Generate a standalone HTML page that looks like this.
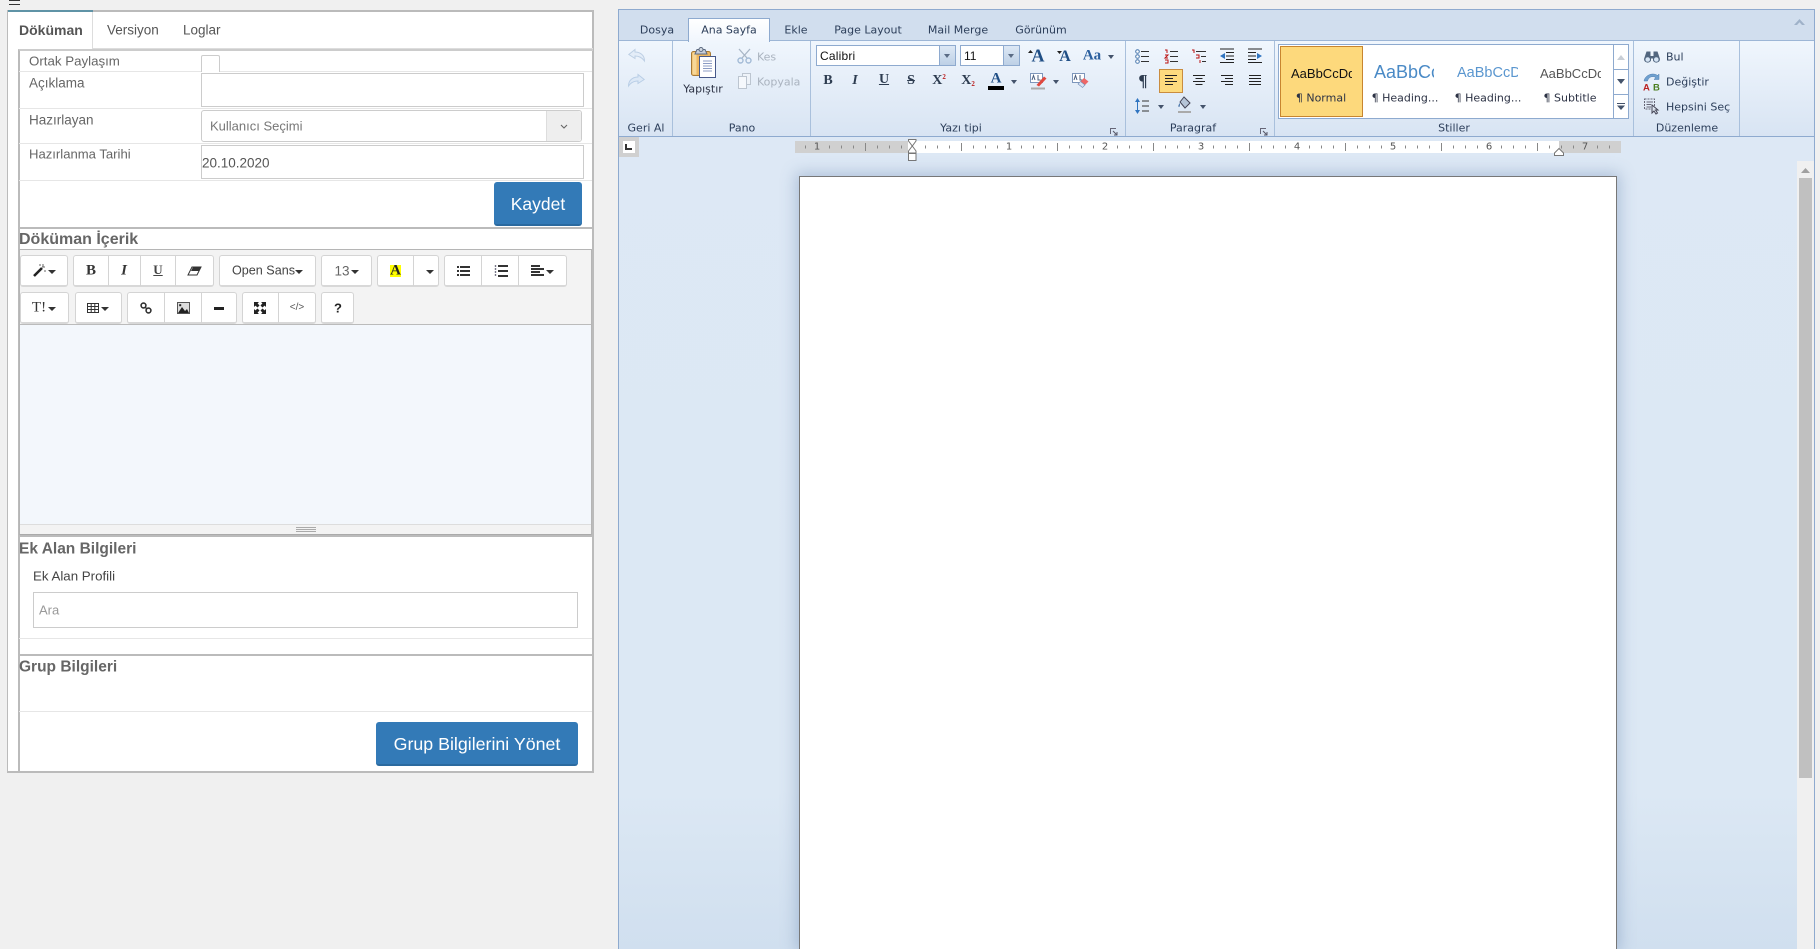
<!DOCTYPE html>
<html lang="tr"><head><meta charset="utf-8"><title>Döküman</title>
<style>
*{box-sizing:border-box}
html,body{margin:0;padding:0;width:1820px;height:949px;overflow:hidden;background:#f0f0f0;font-family:"Liberation Sans",sans-serif}
.a{position:absolute}
.t{position:absolute;white-space:nowrap;transform:translateY(-50%);color:#666;font-size:13.5px;line-height:1}
.c{position:absolute;white-space:nowrap;transform:translate(-50%,-50%);line-height:1}
.line{position:absolute;background:#e6e6e6;height:1px;left:19px;width:573px}
.thick{position:absolute;background:#bbb;height:2px;left:18px;width:575px}
.inp{position:absolute;background:#fff;border:1px solid #ccc}
.btn{position:absolute;background:#337ab7;border-bottom:2px solid #2b6a9f;border-radius:3px;color:#fff;text-align:center}
.g{position:absolute;background:#fff;border:1px solid #d4d4d4;border-bottom:2px solid #d8d8d8;border-radius:3px}
.s{position:absolute;width:1px;background:#d4d4d4}
.car{position:absolute;width:0;height:0;border-left:4px solid transparent;border-right:4px solid transparent;border-top:4px solid #333;transform:translate(-50%,-50%)}
.rt{position:absolute;white-space:nowrap;transform:translateY(-50%);font:11px "DejaVu Sans",sans-serif;color:#2c3e5a;line-height:1}
.rc{position:absolute;white-space:nowrap;transform:translate(-50%,-50%);font:11px "DejaVu Sans",sans-serif;color:#2c3e5a;line-height:1}
.sep{position:absolute;top:41px;height:95px;width:1px;background:#a9c0dc}
.rcar{position:absolute;width:0;height:0;border-left:3.5px solid transparent;border-right:3.5px solid transparent;border-top:4px solid #44536b;transform:translate(-50%,-50%)}
svg{position:absolute;overflow:visible}
</style></head><body>

<!-- hamburger -->
<div class="a" style="left:9px;top:0;width:11px;height:1px;background:#333"></div>
<div class="a" style="left:9px;top:4px;width:11px;height:1px;background:#333"></div>

<!-- LEFT PANEL -->
<div class="a" style="left:7px;top:10px;width:587px;height:763px;background:#fff;border:1px solid #bbb;border-top:2px solid #bbb;border-right:2px solid #bbb;border-bottom:2px solid #bbb"></div>
<div class="a" style="left:8px;top:10px;width:85px;height:2px;background:#5f93a6"></div>
<div class="a" style="left:92px;top:12px;width:1px;height:37px;background:#ddd"></div>
<div class="a" style="left:93px;top:48px;width:500px;height:1px;background:#ddd"></div>
<div class="t" style="left:19px;top:30px;font-weight:bold;font-size:14px;color:#555">Döküman</div>
<div class="t" style="left:107px;top:30px;color:#555">Versiyon</div>
<div class="t" style="left:183px;top:30px;color:#555">Loglar</div>

<div class="a" style="left:18px;top:49px;width:575px;height:723px;border-left:2px solid #bbb;border-top:2px solid #ccc"></div>
<div class="line" style="top:71px;height:1px"></div>
<div class="line" style="top:108px"></div>
<div class="line" style="top:143px"></div>
<div class="line" style="top:180px"></div>

<div class="t" style="left:29px;top:61px;font-size:13.3px">Ortak Paylaşım</div>
<div class="inp" style="left:201px;top:55px;width:19px;height:17px;border-bottom:0;border-radius:2px 2px 0 0"></div>
<div class="t" style="left:29px;top:83px">Açıklama</div>
<div class="inp" style="left:201px;top:73px;width:383px;height:34px"></div>
<div class="t" style="left:29px;top:120px">Hazırlayan</div>
<div class="inp" style="left:201px;top:110px;width:381px;height:32px;border-radius:3px"></div>
<div class="a" style="left:546px;top:111px;width:35px;height:30px;background:#eee;border-left:1px solid #ddd;border-radius:0 3px 3px 0"></div>
<svg style="left:560px;top:124px" width="8" height="6"><path d="M1 1L4 4L7 1" fill="none" stroke="#666" stroke-width="1.1"/></svg>
<div class="t" style="left:210px;top:126px;color:#777;font-size:13px">Kullanıcı Seçimi</div>
<div class="t" style="left:29px;top:154px;font-size:13.1px">Hazırlanma Tarihi</div>
<div class="inp" style="left:201px;top:145px;width:383px;height:34px"></div>
<div class="t" style="left:202px;top:163px;color:#555">20.10.2020</div>

<div class="btn" style="left:494px;top:182px;width:88px;height:44px;font-size:17.5px;line-height:44px">Kaydet</div>
<div class="thick" style="top:227px"></div>

<div class="t" style="left:19px;top:240px;font-weight:bold;font-size:16px;color:#666">Döküman İçerik</div>

<!-- editor -->
<div class="a" style="left:19px;top:249px;width:573px;height:287px;background:#f3f3f3;border:1px solid #b5b5b5;border-bottom:2px solid #aaa"></div>
<div class="a" style="left:20px;top:324px;width:571px;height:1px;background:#bbb"></div>
<div class="a" style="left:20px;top:325px;width:571px;height:200px;background:#f3f7fc;border-bottom:1px solid #ddd"></div>
<div class="a" style="left:296px;top:527px;width:20px;height:1px;background:#aaa"></div>
<div class="a" style="left:296px;top:529px;width:20px;height:1px;background:#aaa"></div>
<div class="a" style="left:296px;top:531px;width:20px;height:1px;background:#aaa"></div>

<!-- toolbar row 1 -->
<div class="g" style="left:20px;top:255px;width:48px;height:32px"></div>
<div class="g" style="left:73px;top:255px;width:141px;height:32px"></div>
<div class="s" style="left:108px;top:256px;height:30px"></div><div class="s" style="left:140px;top:256px;height:30px"></div><div class="s" style="left:175px;top:256px;height:30px"></div>
<div class="g" style="left:219px;top:255px;width:97px;height:32px"></div>
<div class="g" style="left:321px;top:255px;width:51px;height:32px"></div>
<div class="g" style="left:377px;top:255px;width:62px;height:32px"></div>
<div class="s" style="left:413px;top:256px;height:30px"></div>
<div class="g" style="left:444px;top:255px;width:123px;height:32px"></div>
<div class="s" style="left:481px;top:256px;height:30px"></div><div class="s" style="left:518px;top:256px;height:30px"></div>

<svg style="left:33px;top:264px" width="13" height="13"><path d="M1 12L9 4" stroke="#222" stroke-width="2.6"/><path d="M10 0V3M12 3H9M6 1H8M12 6V8" stroke="#666" stroke-width="1"/></svg>
<div class="car" style="left:52px;top:272px"></div>
<div class="c" style="left:91px;top:271px;font:bold 15px 'Liberation Serif',serif;color:#333">B</div>
<div class="c" style="left:124px;top:271px;font:italic bold 15px 'Liberation Serif',serif;color:#333">I</div>
<div class="c" style="left:158px;top:270px;font:bold 13px 'Liberation Serif',serif;color:#444;text-decoration:underline">U</div>
<svg style="left:188px;top:266px" width="13" height="10"><path d="M4 1H13L9 9H0Z" fill="#fff" stroke="#333" stroke-width="1"/><path d="M5 1H13L11 5H3Z" fill="#333"/></svg>
<div class="t" style="left:232px;top:271px;color:#444;font-size:12.6px">Open Sans</div>
<div class="car" style="left:299px;top:272px"></div>
<div class="c" style="left:342px;top:271px;color:#666;font-size:13.5px">13</div>
<div class="car" style="left:355px;top:272px"></div>
<div class="a" style="left:390px;top:265px;width:11px;height:12px;background:#ff0"></div>
<div class="c" style="left:395.5px;top:271px;font:bold 15px 'Liberation Serif',serif;color:#222">A</div>
<div class="car" style="left:430px;top:272px"></div>
<svg style="left:457px;top:265px" width="13" height="12" fill="#333"><rect x="0" y="1" width="2" height="2"/><rect x="0" y="5" width="2" height="2"/><rect x="0" y="9" width="2" height="2"/><rect x="3" y="1" width="10" height="2"/><rect x="3" y="5" width="10" height="2"/><rect x="3" y="9" width="10" height="2"/></svg>
<svg style="left:495px;top:264px" width="13" height="14" fill="#333"><path d="M.5 1V13" stroke="#778" stroke-width="1.4" stroke-dasharray="2 1" fill="none"/><rect x="3" y="1" width="10" height="2"/><rect x="3" y="6" width="10" height="2"/><rect x="3" y="11" width="10" height="2"/></svg>
<svg style="left:531px;top:265px" width="13" height="12" fill="#333"><rect x="0" y="0" width="9" height="2"/><rect x="0" y="3" width="13" height="2"/><rect x="0" y="6" width="9" height="2"/><rect x="0" y="9" width="13" height="2"/></svg>
<div class="car" style="left:550px;top:272px"></div>

<!-- toolbar row 2 -->
<div class="g" style="left:20px;top:292px;width:49px;height:32px;border-bottom:2px solid #d8d8d8"></div>
<div class="g" style="left:75px;top:292px;width:47px;height:32px"></div>
<div class="g" style="left:127px;top:292px;width:110px;height:32px"></div>
<div class="s" style="left:164px;top:293px;height:30px"></div><div class="s" style="left:201px;top:293px;height:30px"></div>
<div class="g" style="left:242px;top:292px;width:74px;height:32px"></div>
<div class="s" style="left:278px;top:293px;height:30px"></div>
<div class="g" style="left:321px;top:292px;width:33px;height:32px"></div>

<div class="c" style="left:39px;top:308px;font:15px 'Liberation Serif',serif;color:#333">T!</div>
<div class="car" style="left:52px;top:309px"></div>
<svg style="left:87px;top:303px" width="12" height="10"><path d="M.5.5H11.5V9.5H.5ZM.5 3.5H11.5M.5 6.5H11.5M4.2.5V9.5M7.8.5V9.5" fill="none" stroke="#333" stroke-width="1"/></svg>
<div class="car" style="left:105px;top:309px"></div>
<svg style="left:140px;top:302px" width="12" height="12"><circle cx="3.5" cy="3.5" r="2.4" fill="none" stroke="#333" stroke-width="1.6"/><circle cx="8.5" cy="8.5" r="2.4" fill="none" stroke="#333" stroke-width="1.6"/><path d="M5 5L7 7" stroke="#333" stroke-width="1.4"/></svg>
<svg style="left:177px;top:302px" width="13" height="12"><rect x=".5" y=".5" width="12" height="11" fill="#ddd" stroke="#555"/><path d="M1 11L5 5L8 9L10 7L12 11Z" fill="#222"/><rect x="2.2" y="2.2" width="2" height="2" fill="#222"/></svg>
<div class="a" style="left:214px;top:307px;width:10px;height:3px;background:#222"></div>
<svg style="left:254px;top:302px" width="12" height="12"><path d="M0 0H5L3.6 1.4L5.5 3.5L3.5 5.5L1.4 3.6L0 5ZM12 0V5L10.6 3.6L8.5 5.5L6.5 3.5L8.4 1.4L7 0ZM0 12V7L1.4 8.4L3.5 6.5L5.5 8.5L3.6 10.6L5 12ZM12 12H7L8.4 10.6L6.5 8.5L8.5 6.5L10.6 8.4L12 7Z" fill="#222"/></svg>
<div class="c" style="left:297px;top:308px;color:#555;font-size:10px">&lt;/&gt;</div>
<div class="c" style="left:338px;top:308px;font-weight:bold;font-size:13px;color:#222">?</div>

<div class="thick" style="top:535px;left:19px;width:574px"></div>
<div class="t" style="left:19px;top:549px;font-weight:bold;font-size:15.5px;color:#666">Ek Alan Bilgileri</div>
<div class="t" style="left:33px;top:576px;color:#444;font-size:13.3px">Ek Alan Profili</div>
<div class="a" style="left:33px;top:592px;width:545px;height:36px;background:#fff;border:1px solid #ccc"></div>
<div class="t" style="left:39px;top:610px;color:#999;font-size:13px">Ara</div>
<div class="line" style="top:638px"></div>
<div class="thick" style="top:654px"></div>
<div class="t" style="left:19px;top:667px;font-weight:bold;font-size:15.5px;color:#666">Grup Bilgileri</div>
<div class="line" style="top:711px"></div>
<div class="btn" style="left:376px;top:722px;width:202px;height:44px;font-size:17.8px;line-height:44px">Grup Bilgilerini Yönet</div>

<!-- RIGHT PANEL -->
<div class="a" style="left:618px;top:9px;width:1197px;height:940px;border:1px solid #8eaacf;border-bottom:0;background:linear-gradient(#dde8f5 0,#dce8f4 780px,#d0dfef 100%)"></div>
<div class="a" style="left:619px;top:10px;width:1195px;height:30px;background:#d1deee"></div>
<div class="a" style="left:619px;top:40px;width:1195px;height:1px;background:#9db6d6"></div>
<div class="a" style="left:619px;top:41px;width:1195px;height:95px;background:linear-gradient(#f0f6fd,#d8e4f3)"></div>
<div class="a" style="left:619px;top:136px;width:1195px;height:1px;background:#8eaacf"></div>
<div class="a" style="left:688px;top:18px;width:82px;height:24px;background:linear-gradient(#fff,#f0f6fd);border:1px solid #8eaacf;border-bottom:0"></div>

<div class="rc" style="left:657px;top:30px">Dosya</div>
<div class="rc" style="left:729px;top:30px">Ana Sayfa</div>
<div class="rc" style="left:796px;top:30px">Ekle</div>
<div class="rc" style="left:868px;top:30px">Page Layout</div>
<div class="rc" style="left:958px;top:30px">Mail Merge</div>
<div class="rc" style="left:1041px;top:30px">Görünüm</div>
<svg style="left:1793px;top:18px" width="13" height="9"><path d="M6.5 1L12 7H9L6.5 4.2L4 7H1Z" fill="#9fb2c9"/></svg>

<div class="sep" style="left:672px"></div>
<div class="sep" style="left:810px"></div>
<div class="sep" style="left:1125px"></div>
<div class="sep" style="left:1274px"></div>
<div class="sep" style="left:1633px"></div>
<div class="sep" style="left:1739px"></div>

<div class="rc" style="left:646px;top:128px">Geri Al</div>
<div class="rc" style="left:742px;top:128px">Pano</div>
<div class="rc" style="left:961px;top:128px">Yazı tipi</div>
<div class="rc" style="left:1193px;top:128px">Paragraf</div>
<div class="rc" style="left:1454px;top:128px">Stiller</div>
<div class="rc" style="left:1687px;top:128px">Düzenleme</div>

<!-- launchers -->
<svg style="left:1110px;top:128px" width="8" height="8"><path d="M.5 6V.5H6" fill="none" stroke="#667"/><path d="M3 3L7 7M7 4V7H4" fill="none" stroke="#556" stroke-width="1"/></svg>
<svg style="left:1260px;top:128px" width="8" height="8"><path d="M.5 6V.5H6" fill="none" stroke="#667"/><path d="M3 3L7 7M7 4V7H4" fill="none" stroke="#556" stroke-width="1"/></svg>

<!-- undo redo -->
<svg style="left:628px;top:49px" width="18" height="13"><path d="M7 .5L.8 5.5L7 9.5V7C11 7 14 8.5 16.5 12C16.5 6 12 3 7 3Z" fill="#e4edf8" stroke="#bdcfe4"/></svg>
<svg style="left:627px;top:74px" width="18" height="13"><path d="M11 .5L17.2 5.5L11 9.5V7C7 7 4 8.5 1.5 12C1.5 6 6 3 11 3Z" fill="#dce8f6" stroke="#b9cee6"/></svg>

<!-- paste -->
<svg style="left:691px;top:47px" width="26" height="32"><rect x=".5" y="4.5" width="19" height="24" rx="2" fill="#eeb760" stroke="#a87a34"/><rect x="1.5" y="5.5" width="4" height="22" fill="#f7d797"/><path d="M6 2.5H14L16 7H4Z" fill="#c7cdd8" stroke="#5c6a80"/><circle cx="10" cy="2.5" r="2" fill="#d4dae3" stroke="#5c6a80"/><rect x="8.5" y="9.5" width="16" height="21" fill="#fff" stroke="#47598a"/><path d="M12 14H21M12 16.5H21M12 19H21M12 21.5H21M12 24H21" stroke="#8c9cc4"/></svg>
<div class="rc" style="left:703px;top:89px;color:#2c3244">Yapıştır</div>
<svg style="left:737px;top:48px" width="15" height="16"><path d="M2 1L10 10M13 1L5 10" stroke="#a8b6c6" stroke-width="1.3" fill="none"/><circle cx="3.5" cy="12.5" r="2.5" fill="none" stroke="#a3bbd6" stroke-width="1.4"/><circle cx="11.5" cy="12.5" r="2.5" fill="none" stroke="#a3bbd6" stroke-width="1.4"/></svg>
<div class="rt" style="left:757px;top:57px;color:#aab3bf">Kes</div>
<svg style="left:738px;top:73px" width="13" height="16"><rect x="4.5" y=".5" width="8" height="11" fill="#eef3f9" stroke="#bcc5d0"/><rect x=".5" y="3.5" width="8" height="12" fill="#f5f8fc" stroke="#bcc5d0"/></svg>
<div class="rt" style="left:757px;top:82px;color:#aab3bf">Kopyala</div>

<!-- font boxes -->
<div class="a" style="left:816px;top:45px;width:140px;height:21px;background:#fff;border:1px solid #8eaacf"></div>
<div class="a" style="left:939px;top:46px;width:16px;height:19px;background:linear-gradient(#dde8f5,#bdd0e6);border-left:1px solid #8eaacf"></div>
<div class="rcar" style="left:947px;top:56px;border-top-color:#5a6b85"></div>
<div class="t" style="left:820px;top:56px;font-size:12px;color:#111;letter-spacing:.2px">Calibri</div>
<div class="a" style="left:960px;top:45px;width:60px;height:21px;background:#fff;border:1px solid #8eaacf"></div>
<div class="a" style="left:1003px;top:46px;width:16px;height:19px;background:linear-gradient(#dde8f5,#bdd0e6);border-left:1px solid #8eaacf"></div>
<div class="rcar" style="left:1011px;top:56px;border-top-color:#5a6b85"></div>
<div class="t" style="left:964px;top:56px;font-size:12px;color:#111">11</div>

<!-- font row 1 -->
<div class="c" style="left:1038px;top:56px;font:bold 18px 'Liberation Serif',serif;color:#1f4e85">A</div>
<svg style="left:1028px;top:50px" width="5" height="3"><path d="M0 3L2.5 0L5 3Z" fill="#222"/></svg>
<div class="c" style="left:1065px;top:57px;font:bold 16px 'Liberation Serif',serif;color:#1f4e85">A</div>
<svg style="left:1057px;top:51px" width="5" height="3"><path d="M0 0H5L2.5 3Z" fill="#222"/></svg>
<div class="c" style="left:1092px;top:56px;font:bold 15px 'Liberation Serif',serif;color:#2b5f9e">Aa</div>
<div class="rcar" style="left:1111px;top:57px"></div>

<!-- font row 2 -->
<div class="c" style="left:828px;top:81px;font:bold 14px 'Liberation Serif',serif;color:#2d3c50">B</div>
<div class="c" style="left:855px;top:81px;font:italic bold 14px 'Liberation Serif',serif;color:#2d3c50">I</div>
<div class="c" style="left:884px;top:80px;font:bold 14px 'Liberation Serif',serif;color:#2d3c50;text-decoration:underline">U</div>
<div class="c" style="left:911px;top:81px;font:bold 14px 'Liberation Serif',serif;color:#2d3c50;text-decoration:line-through">S</div>
<div class="c" style="left:939px;top:81px;font:bold 14px 'Liberation Serif',serif;color:#2d3c50">X<span style="font-size:7px;color:#b22;vertical-align:5px">2</span></div>
<div class="c" style="left:968px;top:81px;font:bold 14px 'Liberation Serif',serif;color:#2d3c50">X<span style="font-size:7px;color:#b22;vertical-align:-2px">2</span></div>
<div class="c" style="left:996px;top:79px;font:bold 15px 'Liberation Serif',serif;color:#1f4e85">A</div>
<div class="a" style="left:988px;top:86px;width:16px;height:4px;background:#000"></div>
<div class="rcar" style="left:1014px;top:82px"></div>
<svg style="left:1030px;top:73px" width="17" height="17"><rect x=".5" y=".5" width="12" height="9" fill="#fff" stroke="#7d96bb"/><path d="M2 7L3.5 2.5L5 7M8 2V7H10.5" fill="none" stroke="#4a5f80"/><path d="M6.5 12L14 3.5L16.5 5.5L9 13.5Z" fill="#e0483e"/><rect x="1" y="14.5" width="14" height="2" fill="#aaa"/></svg>
<div class="rcar" style="left:1056px;top:82px"></div>
<svg style="left:1072px;top:73px" width="17" height="16"><rect x=".5" y=".5" width="12" height="9" fill="#fff" stroke="#7d96bb"/><path d="M2 7L3.5 2.5L5 7M8 2V7H10.5" fill="none" stroke="#4a5f80"/><path d="M6 11L12 5L16.5 8.5L10.5 14.5Z" fill="#e66"/><path d="M6 11L8.5 8.5L13 12L10.5 14.5Z" fill="#d9e4f3" stroke="#6f8cb8" stroke-width=".6"/></svg>

<!-- paragraph row 1 -->
<svg style="left:1135px;top:49px" width="15" height="15"><g fill="#fff" stroke="#4978ad" stroke-width="1"><circle cx="2.5" cy="2.5" r="1.8"/><circle cx="2.5" cy="7.5" r="1.8"/><circle cx="2.5" cy="12.5" r="1.8"/></g><path d="M6 2.5H14M6 7.5H14M6 12.5H14" stroke="#333"/></svg>
<svg style="left:1164px;top:49px" width="15" height="15"><path d="M1 1H3V4M1 6H4L1 9H4M1 11H4V14H1" fill="none" stroke="#b11" stroke-width="1"/><path d="M6 2.5H14M6 7.5H14M6 12.5H14" stroke="#333"/></svg>
<svg style="left:1192px;top:49px" width="15" height="15"><path d="M0 1H2V4M4 6H7V9H4M8 11V14" fill="none" stroke="#b11" stroke-width="1"/><path d="M4 2.5H14M9 7.5H14M10 12.5H14" stroke="#333"/></svg>
<svg style="left:1219px;top:48px" width="16" height="15"><path d="M1 1H15M7 4.5H15M7 8H15M7 11.5H15M1 14.5H15" stroke="#222"/><path d="M6 5V11L1 8Z" fill="#2f74c0"/></svg>
<svg style="left:1247px;top:48px" width="16" height="15"><path d="M1 1H15M1 4.5H9M1 8H9M1 11.5H9M1 14.5H15" stroke="#222"/><path d="M10 5V11L15 8Z" fill="#2f74c0"/></svg>

<!-- paragraph row 2 -->
<div class="c" style="left:1143px;top:81px;font:bold 17px 'Liberation Serif',serif;color:#2d3c50">¶</div>
<div class="a" style="left:1159px;top:69px;width:24px;height:24px;background:#fddb7e;border:1px solid #c98c3f"></div>
<svg style="left:1164px;top:75px" width="14" height="12"><path d="M1 .5H13M1 3.5H9M1 6.5H13M1 9.5H9" stroke="#222"/></svg>
<svg style="left:1192px;top:75px" width="14" height="12"><path d="M1 .5H13M3.5 3.5H10.5M1 6.5H13M3.5 9.5H10.5" stroke="#222"/></svg>
<svg style="left:1220px;top:75px" width="14" height="12"><path d="M1 .5H13M5 3.5H13M1 6.5H13M5 9.5H13" stroke="#222"/></svg>
<svg style="left:1248px;top:75px" width="14" height="12"><path d="M1 .5H13M1 3.5H13M1 6.5H13M1 9.5H13" stroke="#222"/></svg>

<!-- paragraph row 3 -->
<svg style="left:1135px;top:98px" width="15" height="16"><path d="M2.5 0L5 4H0ZM2.5 16L5 12H0Z" fill="#2f74c0"/><path d="M2.5 4V12" stroke="#2f74c0"/><path d="M7 3H14M7 8H14M7 13H14" stroke="#333"/></svg>
<div class="rcar" style="left:1161px;top:107px"></div>
<svg style="left:1177px;top:96px" width="15" height="18"><path d="M3 6L7 1L13 7L8 12Z" fill="#b6c5d8" stroke="#445"/><path d="M3 7C1 9 1 11 2 11C3 11 3 9 3 7Z" fill="#4d78aa"/><rect x="1" y="15" width="13" height="2" fill="#aaa"/></svg>
<div class="rcar" style="left:1203px;top:107px"></div>

<!-- styles -->
<div class="a" style="left:1278px;top:44px;width:351px;height:75px;background:#fff;border:1px solid #8eaacf"></div>
<div class="a" style="left:1280px;top:46px;width:83px;height:71px;background:#fdd97c;border:1px solid #c8852f"></div>
<div class="a" style="left:1613px;top:45px;width:15px;height:73px;background:#fff;border-left:1px solid #8eaacf"></div>
<div class="a" style="left:1613px;top:69px;width:16px;height:1px;background:#8eaacf"></div>
<div class="a" style="left:1613px;top:94px;width:16px;height:1px;background:#8eaacf"></div>
<svg style="left:1617px;top:55px" width="8" height="5"><path d="M0 5L4 0L8 5Z" fill="#c8ced6"/></svg>
<svg style="left:1617px;top:79px" width="8" height="5"><path d="M0 0H8L4 5Z" fill="#44536b"/></svg>
<svg style="left:1617px;top:103px" width="8" height="7"><path d="M0 0H8V1H0ZM0 2.5H8L4 7Z" fill="#44536b"/></svg>
<div class="a" style="left:1291px;top:64px;width:61px;height:20px;overflow:hidden;font-size:13px;line-height:20px;color:#111;white-space:nowrap">AaBbCcDd</div>
<div class="c" style="left:1321px;top:98px;font:11px 'DejaVu Sans',sans-serif;color:#2c3244">¶ Normal</div>
<div class="a" style="left:1374px;top:59px;width:60px;height:26px;overflow:hidden;font-size:18px;line-height:26px;color:#4a8ac6;white-space:nowrap">AaBbCc</div>
<div class="c" style="left:1405px;top:98px;font:11px 'DejaVu Sans',sans-serif;color:#2c3244">¶ Heading...</div>
<div class="a" style="left:1457px;top:62px;width:61px;height:22px;overflow:hidden;font-size:14.5px;line-height:22px;color:#5a96cf;white-space:nowrap">AaBbCcDd</div>
<div class="c" style="left:1488px;top:98px;font:11px 'DejaVu Sans',sans-serif;color:#2c3244">¶ Heading...</div>
<div class="a" style="left:1540px;top:64px;width:61px;height:20px;overflow:hidden;font-size:13px;line-height:20px;color:#555;white-space:nowrap">AaBbCcDd</div>
<div class="c" style="left:1570px;top:98px;font:11px 'DejaVu Sans',sans-serif;color:#2c3244">¶ Subtitle</div>

<!-- editing -->
<svg style="left:1644px;top:50px" width="16" height="14"><path d="M2.5 1.5H6.5V6H9.5V1.5H13.5L16 9A3.7 3.7 0 0 1 9 10.5V8.5H7V10.5A3.7 3.7 0 0 1 0 9Z" fill="#52667f"/><circle cx="3.7" cy="9.5" r="2.3" fill="#d6e5f5"/><circle cx="12.3" cy="9.5" r="2.3" fill="#d6e5f5"/></svg>
<div class="rt" style="left:1666px;top:57px">Bul</div>
<svg style="left:1643px;top:72px" width="17" height="19"><path d="M1 9C2 3 10 0 14.5 3.5L16 2V7.5H11L12.8 5.5C9.5 3.5 5.5 5 4.5 9Z" fill="#6fa0cf" stroke="#4e7eaf" stroke-width=".5"/><text x="0" y="18.5" font-family="Liberation Sans" font-weight="bold" font-size="9.5" fill="#b22">A</text><text x="10" y="18.5" font-family="Liberation Sans" font-weight="bold" font-size="9.5" fill="#4a7d1e">B</text></svg>
<div class="rt" style="left:1666px;top:82px">Değiştir</div>
<svg style="left:1644px;top:98px" width="16" height="17"><path d="M.5 1H10.5V11H.5Z" fill="none" stroke="#667" stroke-dasharray="2 1"/><path d="M2.5 4H9M2.5 6.5H7M2.5 9H7" stroke="#667"/><path d="M8 7L8 15L10 13L12 16L13.5 15L11.5 12L14 12Z" fill="#dde6f1" stroke="#445"/></svg>
<div class="rt" style="left:1666px;top:107px">Hepsini Seç</div>

<!-- ruler -->
<div class="a" style="left:619px;top:137px;width:20px;height:20px;background:#d0d0d0"></div>
<div class="a" style="left:623px;top:141px;width:12px;height:12px;background:#fff"></div>
<svg style="left:625px;top:144px" width="8" height="7"><path d="M1 0V5H7" fill="none" stroke="#333" stroke-width="2"/></svg>
<div class="a" style="left:795px;top:141px;width:826px;height:12px;background:#fff"></div>
<div class="a" style="left:795px;top:141px;width:113px;height:12px;background:#d0d0d0"></div>
<div class="a" style="left:1559px;top:141px;width:62px;height:12px;background:#d0d0d0"></div>
<svg style="left:795px;top:141px" width="826" height="12">
<defs><pattern id="rp" x="22" y="0" width="96" height="12" patternUnits="userSpaceOnUse"><path d="M12.5 4.5V7.5M24.5 4.5V7.5M36.5 4.5V7.5M48.5 2V10M60.5 4.5V7.5M72.5 4.5V7.5M84.5 4.5V7.5" stroke="#888" stroke-width="1"/></pattern></defs>
<rect x="0" y="0" width="826" height="12" fill="url(#rp)"/></svg>
<div class="c" style="left:817px;top:147px;font:10px 'DejaVu Sans',sans-serif;color:#555">1</div>
<div class="c" style="left:1009px;top:147px;font:10px 'DejaVu Sans',sans-serif;color:#555">1</div>
<div class="c" style="left:1105px;top:147px;font:10px 'DejaVu Sans',sans-serif;color:#555">2</div>
<div class="c" style="left:1201px;top:147px;font:10px 'DejaVu Sans',sans-serif;color:#555">3</div>
<div class="c" style="left:1297px;top:147px;font:10px 'DejaVu Sans',sans-serif;color:#555">4</div>
<div class="c" style="left:1393px;top:147px;font:10px 'DejaVu Sans',sans-serif;color:#555">5</div>
<div class="c" style="left:1489px;top:147px;font:10px 'DejaVu Sans',sans-serif;color:#555">6</div>
<div class="c" style="left:1585px;top:147px;font:10px 'DejaVu Sans',sans-serif;color:#555">7</div>
<svg style="left:908px;top:139px" width="9" height="22"><path d="M.5.5H8V2L4.3 7L.5 2Z" fill="#fff" stroke="#777"/><path d="M4.3 7L8 12V14H.5V12Z" fill="#fff" stroke="#777"/><rect x=".5" y="14.5" width="7.5" height="7" fill="#fff" stroke="#777"/></svg>
<svg style="left:1554px;top:148px" width="10" height="8"><path d="M5 .5L9.5 5V7.5H.5V5Z" fill="#fff" stroke="#777"/></svg>

<!-- page -->
<div class="a" style="left:799px;top:176px;width:818px;height:773px;background:#fff;border:1px solid #777;border-bottom:0;box-shadow:0 0 14px 3px rgba(90,120,165,.35)"></div>

<!-- scrollbar -->
<div class="a" style="left:1797px;top:161px;width:17px;height:788px;background:#f0f0f0"></div>
<div class="a" style="left:1799px;top:178px;width:13px;height:600px;background:#c0c0c0"></div>
<svg style="left:1801px;top:168px" width="9" height="5"><path d="M0 5L4.5 0L9 5Z" fill="#a0a0a0"/></svg>

</body></html>
